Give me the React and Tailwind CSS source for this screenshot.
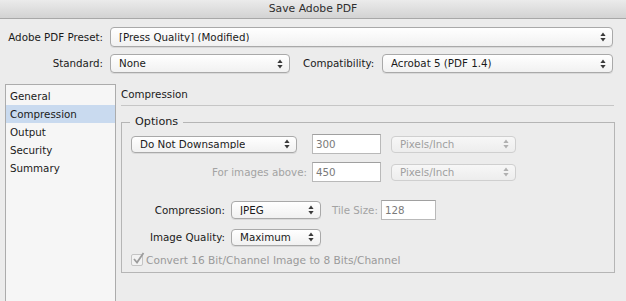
import React from "react";

const Arrows = ({ color = "#333" }) => (
  <svg width="6" height="10" viewBox="0 0 6 10" className="shrink-0">
    <path d="M3 0.5 L5.6 4 L0.4 4 Z" fill={color} />
    <path d="M3 9.5 L5.6 6 L0.4 6 Z" fill={color} />
  </svg>
);

const Select = ({ value, w, h = "h-[19px]", disabled = false }) => (
  <div
    className={`${w} ${h} flex items-center justify-between rounded-[4px] border pl-[8px] pr-[6px] ${
      disabled
        ? "border-[#cfcfcf] bg-gradient-to-b from-[#f7f7f7] to-[#ededed] text-[#a0a0a0]"
        : "border-[#a9a9a9] bg-gradient-to-b from-[#ffffff] to-[#f1f1f1] text-[#1a1a1a] shadow-[0_1px_0_rgba(0,0,0,0.08)]"
    }`}
  >
    <span className="truncate">{value}</span>
    <Arrows color={disabled ? "#b0b0b0" : "#3a3a3a"} />
  </div>
);

const Input = ({ value, w }) => (
  <div
    className={`${w} h-[20px] flex items-center border border-[#b9b9b9] border-t-[#a0a0a0] bg-white pl-[3px] text-[#7a7a7a]`}
  >
    {value}
  </div>
);

export default function App() {
  const items = ["General", "Compression", "Output", "Security", "Summary"];
  return (
    <div
      className="w-[626px] h-[301px] overflow-hidden bg-[#ececec] text-[10.3px] text-[#1a1a1a] leading-none"
      style={{ fontFamily: '"DejaVu Sans", Verdana, sans-serif' }}
    >
      {/* Title bar */}
      <div className="h-[19px] flex items-center justify-center bg-gradient-to-b from-[#ebebeb] to-[#d3d3d3] border-b border-[#a8a8a8] text-[10.8px] text-[#2e2e2e]">
        Save Adobe PDF
      </div>

      {/* Preset row */}
      <div className="mt-[8px] flex items-center">
        <div className="w-[103px] text-right">Adobe PDF Preset:</div>
        <div className="ml-[7px]">
          <Select value="[Press Quality] (Modified)" w="w-[503px]" h="h-[20px]" />
        </div>
      </div>

      {/* Standard row */}
      <div className="mt-[7px] flex items-center">
        <div className="w-[103px] text-right">Standard:</div>
        <div className="ml-[7px]">
          <Select value="None" w="w-[180px]" h="h-[19px]" />
        </div>
        <div className="ml-[13px] w-[72px]">Compatibility:</div>
        <div className="ml-[7px]">
          <Select value="Acrobat 5 (PDF 1.4)" w="w-[231px]" h="h-[19px]" />
        </div>
      </div>

      {/* Main */}
      <div className="mt-[11px] flex">
        {/* Sidebar */}
        <div className="ml-[5px] w-[111px] h-[230px] border border-[#acacac] bg-[#f6f6f6] pt-[2px]">
          {items.map((it) => (
            <div
              key={it}
              className={`h-[18px] flex items-center pl-[4px] ${
                it === "Compression" ? "bg-[#c9daef]" : ""
              }`}
            >
              {it}
            </div>
          ))}
        </div>

        {/* Right panel */}
        <div className="ml-[5px] w-[494px]">
          <div className="h-[22px] flex items-center pb-[1px] border-b border-[#c6c6c6] mr-[1px]">
            Compression
          </div>

          <div className="relative mt-[16px] h-[151px] border border-[#b5b5b5] pt-[11px] pl-[9px]">
            <span className="absolute left-[8px] top-[-7px] bg-[#ececec] px-[5px] text-[11.2px]">
              Options
            </span>

            {/* Row A */}
            <div className="flex items-center h-[20px]">
              <Select value="Do Not Downsample" w="w-[166px]" h="h-[17px]" />
              <div className="ml-[15px]">
                <Input value="300" w="w-[69px]" />
              </div>
              <div className="ml-[10px]">
                <Select value="Pixels/Inch" w="w-[125px]" h="h-[17px]" disabled />
              </div>
            </div>

            {/* Row B */}
            <div className="mt-[8px] flex items-center h-[20px]">
              <div className="w-[176px] text-right text-[#a3a3a3]">For images above:</div>
              <div className="ml-[5px]">
                <Input value="450" w="w-[69px]" />
              </div>
              <div className="ml-[10px]">
                <Select value="Pixels/Inch" w="w-[125px]" h="h-[17px]" disabled />
              </div>
            </div>

            {/* Row C */}
            <div className="mt-[18px] flex items-center h-[20px]">
              <div className="w-[94px] text-right">Compression:</div>
              <div className="ml-[6px]">
                <Select value="JPEG" w="w-[90px]" h="h-[18px]" />
              </div>
              <div className="ml-[11px] text-[#a3a3a3]">Tile Size:</div>
              <div className="ml-[3px]">
                <Input value="128" w="w-[55px]" />
              </div>
            </div>

            {/* Row D */}
            <div className="mt-[7px] flex items-center h-[20px]">
              <div className="w-[94px] text-right">Image Quality:</div>
              <div className="ml-[6px]">
                <Select value="Maximum" w="w-[90px]" h="h-[17px]" />
              </div>
            </div>

            {/* Row E */}
            <div className="mt-[6px] flex items-center h-[14px] text-[#9a9a9a]">
              <div className="relative w-[12px] h-[12px] border border-[#c4c4c4] bg-[#f2f2f2] rounded-[2px]">
                <svg width="13" height="13" viewBox="0 0 13 13" className="absolute left-[0px] top-[-3px]">
                  <path d="M2 7 L5 10.5 L11.5 1" stroke="#9c9c9c" strokeWidth="1.8" fill="none" />
                </svg>
              </div>
              <span className="ml-[3px] text-[10.6px]">Convert 16 Bit/Channel Image to 8 Bits/Channel</span>
            </div>
          </div>
        </div>
      </div>
    </div>
  );
}
